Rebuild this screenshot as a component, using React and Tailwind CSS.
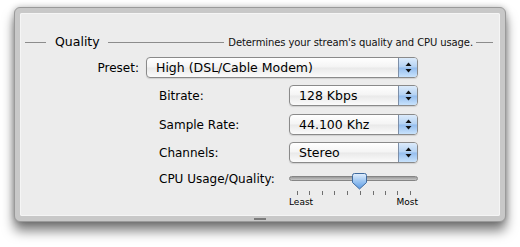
import React from 'react';

const font = "font-['DejaVu_Sans','Liberation_Sans',sans-serif]";

function Stepper() {
    return (
        <div className="w-[19px] h-full border-l border-[#7d8fa8] bg-[linear-gradient(to_bottom,#dcebfb,#b4d2f3_48%,#94bdee_52%,#c9e3fc)] flex items-center justify-center">
            <svg width="7" height="11" viewBox="0 0 7 11">
                <path d="M3.5 0.5 L6.5 4 H0.5 Z" fill="#111" />
                <path d="M0.5 7 H6.5 L3.5 10.5 Z" fill="#111" />
            </svg>
        </div>
    );
}

function Popup({ value, width }) {
    return (
        <div className={`flex h-[21px] ${width} rounded-[4px] border border-[#8a8a8a] bg-[linear-gradient(to_bottom,#ffffff,#f4f4f4_48%,#e9e9e9_52%,#fbfbfb)] shadow-[0_1px_1px_rgba(0,0,0,0.12)] overflow-hidden`}>
            <span className="flex-1 pl-[9px] text-[12.5px] leading-[19px] text-black">{value}</span>
            <Stepper />
        </div>
    );
}

function Row({ label, value }) {
    return (
        <div className="flex items-center pl-[139px]">
            <span className="w-[130px] text-[12px] text-black">{label}</span>
            <Popup value={value} width="w-[129px]" />
        </div>
    );
}

function Slider() {
    const ticks = [8, 20, 33, 45, 58, 71, 84, 96, 108, 121];
    return (
        <div className="relative w-[129px] h-[40px]">
            <div className="absolute left-0 right-0 top-[6px] h-[5px] rounded-full border border-[#858585] bg-[linear-gradient(to_bottom,#9a9a9a,#c6c6c6)]" />
            <svg className="absolute left-[63px] top-[3px]" width="15" height="17" viewBox="0 0 15 17">
                <defs>
                    <linearGradient id="thumb" x1="0" y1="0" x2="0" y2="1">
                        <stop offset="0" stopColor="#e3effc" />
                        <stop offset="0.5" stopColor="#9cc5f1" />
                        <stop offset="1" stopColor="#5b9ae4" />
                    </linearGradient>
                </defs>
                <path d="M0.5 2.5 Q0.5 0.5 2.5 0.5 H12.5 Q14.5 0.5 14.5 2.5 V9.5 L7.5 16 L0.5 9.5 Z" fill="url(#thumb)" stroke="#3f6a9e" />
            </svg>
            {ticks.map((t) => (
                <div key={t} className="absolute top-[21px] w-px h-[4px] bg-[#6f6f6f]" style={{ left: t }} />
            ))}
            <span className="absolute left-0 top-[27px] text-[9px] leading-[11px] text-black">Least</span>
            <span className="absolute right-0 top-[27px] text-[9px] leading-[11px] text-black">Most</span>
        </div>
    );
}

export default function App() {
    return (
        <div className={`w-[520px] h-[247px] bg-white pl-[14px] pt-[7px] ${font}`}>
            <div className="w-[492px] h-[215px] rounded-[6px] border border-[#9a9a9a] bg-[#c8c8c8] shadow-[0_9px_12px_rgba(0,0,0,0.5),0_0_6px_rgba(0,0,0,0.25)] px-[5px] pt-[5px] flex flex-col">
                <div className="flex-1 bg-[#ececec] rounded-[2px] shadow-[inset_0_0_0_1px_#f5f5f5] pt-[21px]">
                    {/* Header */}
                    <div className="flex items-center h-[16px] pl-[5px] pr-[7px]">
                        <div className="w-[21px] h-px bg-[#8c8c8c]" />
                        <span className="ml-[9px] text-[12.5px] text-black">Quality</span>
                        <div className="flex-1 ml-[8px] h-px bg-[#8c8c8c]" />
                        <span className="ml-[4px] text-[10px] tracking-[-0.1px] text-[#111]">Determines your stream's quality and CPU usage.</span>
                        <div className="ml-[3px] w-[17px] h-px bg-[#8c8c8c]" />
                    </div>

                    {/* Preset */}
                    <div className="flex items-center mt-[7px]">
                        <span className="w-[119px] text-right text-[12px] text-black">Preset:</span>
                        <div className="ml-[7px]">
                            <Popup value="High (DSL/Cable Modem)" width="w-[272px]" />
                        </div>
                    </div>

                    <div className="mt-[7px]"><Row label="Bitrate:" value="128 Kbps" /></div>
                    <div className="mt-[8px]"><Row label="Sample Rate:" value="44.100 Khz" /></div>
                    <div className="mt-[7px]"><Row label="Channels:" value="Stereo" /></div>

                    {/* Slider */}
                    <div className="flex items-start pl-[139px] mt-[7px]">
                        <span className="w-[130px] h-[18px] leading-[18px] text-[12px] text-black">CPU Usage/Quality:</span>
                        <Slider />
                    </div>
                </div>
                <div className="h-[5px] flex items-center justify-center">
                    <div className="w-[12px] h-[2px] bg-[#7a7a7a]" />
                </div>
            </div>
        </div>
    );
}
